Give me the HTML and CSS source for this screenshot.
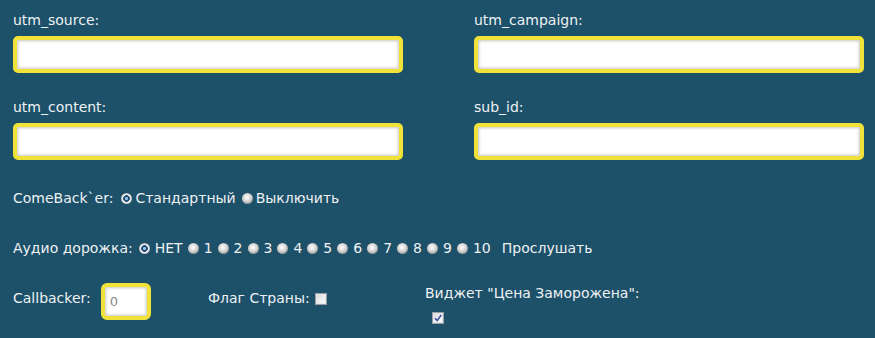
FILE: index.html
```html
<!DOCTYPE html>
<html lang="ru">
<head>
<meta charset="utf-8">
<title>Settings</title>
<link rel="stylesheet" href="styles.css">
</head>
<body>
<form class="page">
  <div class="fields">
    <div class="field">
      <label class="field-label" for="f1">utm_source:</label>
      <input class="text-input" id="f1" type="text">
    </div>
    <div class="field">
      <label class="field-label" for="f2">utm_campaign:</label>
      <input class="text-input" id="f2" type="text">
    </div>
    <div class="field">
      <label class="field-label" for="f3">utm_content:</label>
      <input class="text-input" id="f3" type="text">
    </div>
    <div class="field">
      <label class="field-label" for="f4">sub_id:</label>
      <input class="text-input" id="f4" type="text">
    </div>
  </div>

  <div class="option-row row-comeback">
    <span class="row-label">ComeBack`er:</span>
    <label class="opt"><input class="radio" type="radio" name="cb" checked>Стандартный</label>
    <label class="opt"><input class="radio" type="radio" name="cb">Выключить</label>
  </div>

  <div class="option-row row-audio">
    <span class="row-label">Аудио дорожка:</span>
    <label class="opt"><input class="radio" type="radio" name="au" checked>НЕТ</label>
    <label class="opt"><input class="radio" type="radio" name="au">1</label>
    <label class="opt"><input class="radio" type="radio" name="au">2</label>
    <label class="opt"><input class="radio" type="radio" name="au">3</label>
    <label class="opt"><input class="radio" type="radio" name="au">4</label>
    <label class="opt"><input class="radio" type="radio" name="au">5</label>
    <label class="opt"><input class="radio" type="radio" name="au">6</label>
    <label class="opt"><input class="radio" type="radio" name="au">7</label>
    <label class="opt"><input class="radio" type="radio" name="au">8</label>
    <label class="opt"><input class="radio" type="radio" name="au">9</label>
    <label class="opt"><input class="radio" type="radio" name="au">10</label>
    <span class="listen">Прослушать</span>
  </div>

  <div class="bottom-row">
    <div class="cb-group">
      <span class="cb-label">Callbacker:</span>
      <input class="small-input" type="text" value="0">
    </div>
    <div class="flag-group">
      <span class="flag-label">Флаг Страны:</span>
      <span class="check"></span>
    </div>
    <div class="widget-group">
      <span class="widget-label">Виджет "Цена Заморожена":</span>
      <span class="check check-on"><svg viewBox="0 0 10 10" width="10" height="10"><path d="M2 5.2 L4.2 7.6 L8.2 2" fill="none" stroke="#3b4ea0" stroke-width="1.6"/></svg></span>
    </div>
  </div>
</form>
</body>
</html>
```

FILE: styles.css
```css
html, body {
  margin: 0;
  background: #1d5069;
}

body {
  font-family: "DejaVu Sans", Verdana, sans-serif;
  font-size: 14px;
  line-height: 17px;
  color: #eef2f4;
  width: 875px;
  height: 338px;
  overflow: hidden;
}

.page {
  padding: 12px 0 0 13px;
}

.fields {
  display: grid;
  grid-template-columns: 461px 390px;
  row-gap: 26px;
}

.field-label {
  display: block;
  margin-bottom: 7px;
}

.text-input {
  display: block;
  box-sizing: border-box;
  width: 390px;
  height: 37px;
  margin: 0;
  border: 4px solid #f1e23a;
  border-radius: 5px;
  background: #fff;
  box-shadow: inset 0 0 3px 1px #c9c6bc;
  outline: none;
}

.option-row {
  display: flex;
  align-items: center;
  height: 17px;
  white-space: nowrap;
}

.row-comeback {
  margin-top: 30px;
}

.row-audio {
  margin-top: 33px;
}

.row-label {
  margin-right: 6px;
}

.row-comeback .row-label {
  margin-right: 8px;
}

.opt {
  display: inline-flex;
  align-items: center;
  margin-right: 5px;
}

.radio {
  appearance: none;
  -webkit-appearance: none;
  width: 11px;
  height: 11px;
  margin: 0 5px 0 0;
  border-radius: 50%;
  background: radial-gradient(circle at 45% 40%, #ffffff 0, #e6e6e6 2.5px, #c4c4c4 5px, #9c9c9c 6px);
}

.row-comeback .radio {
  margin-right: 3px;
}

.row-comeback .opt {
  margin-right: 6px;
}

.radio:checked {
  background: radial-gradient(circle, #9cc9e6 0, #9cc9e6 1.2px, #1c4a74 1.8px, #1c4a74 3px, #f4f4f4 3.6px, #dcdcdc 4.6px, #9a9a9a 6px);
}

.listen {
  margin-left: 6px;
}

.bottom-row {
  display: grid;
  grid-template-columns: 195px 217px auto;
  align-items: start;
  margin-top: 26px;
}

.cb-group {
  display: flex;
  align-items: flex-start;
}

.cb-label {
  margin-top: 7px;
}

.small-input {
  box-sizing: border-box;
  width: 50px;
  height: 37px;
  margin: 0 0 0 10px;
  padding: 0 0 0 5px;
  border: 4px solid #f1e23a;
  border-radius: 6px;
  background: #fff;
  box-shadow: inset 0 0 3px 1px #c9c6bc;
  font-family: "DejaVu Sans", Verdana, sans-serif;
  font-size: 13px;
  color: #8a8a8a;
  outline: none;
}

.flag-group {
  display: flex;
  align-items: center;
  margin-top: 7px;
}

.flag-label {
  margin-right: 5px;
}

.check {
  display: inline-flex;
  align-items: center;
  justify-content: center;
  box-sizing: border-box;
  width: 12px;
  height: 12px;
  border: 1px solid #9a9ea6;
  background: linear-gradient(135deg, #d6d8dc 0%, #f0f1f3 60%, #ffffff 100%);
  box-shadow: inset 0 0 0 1px #e4e6ea;
}

.widget-group {
  display: flex;
  flex-direction: column;
  align-items: flex-start;
  margin-top: 2px;
}

.check-on {
  margin: 10px 0 0 7px;
}

.check-on svg {
  display: block;
}
```
